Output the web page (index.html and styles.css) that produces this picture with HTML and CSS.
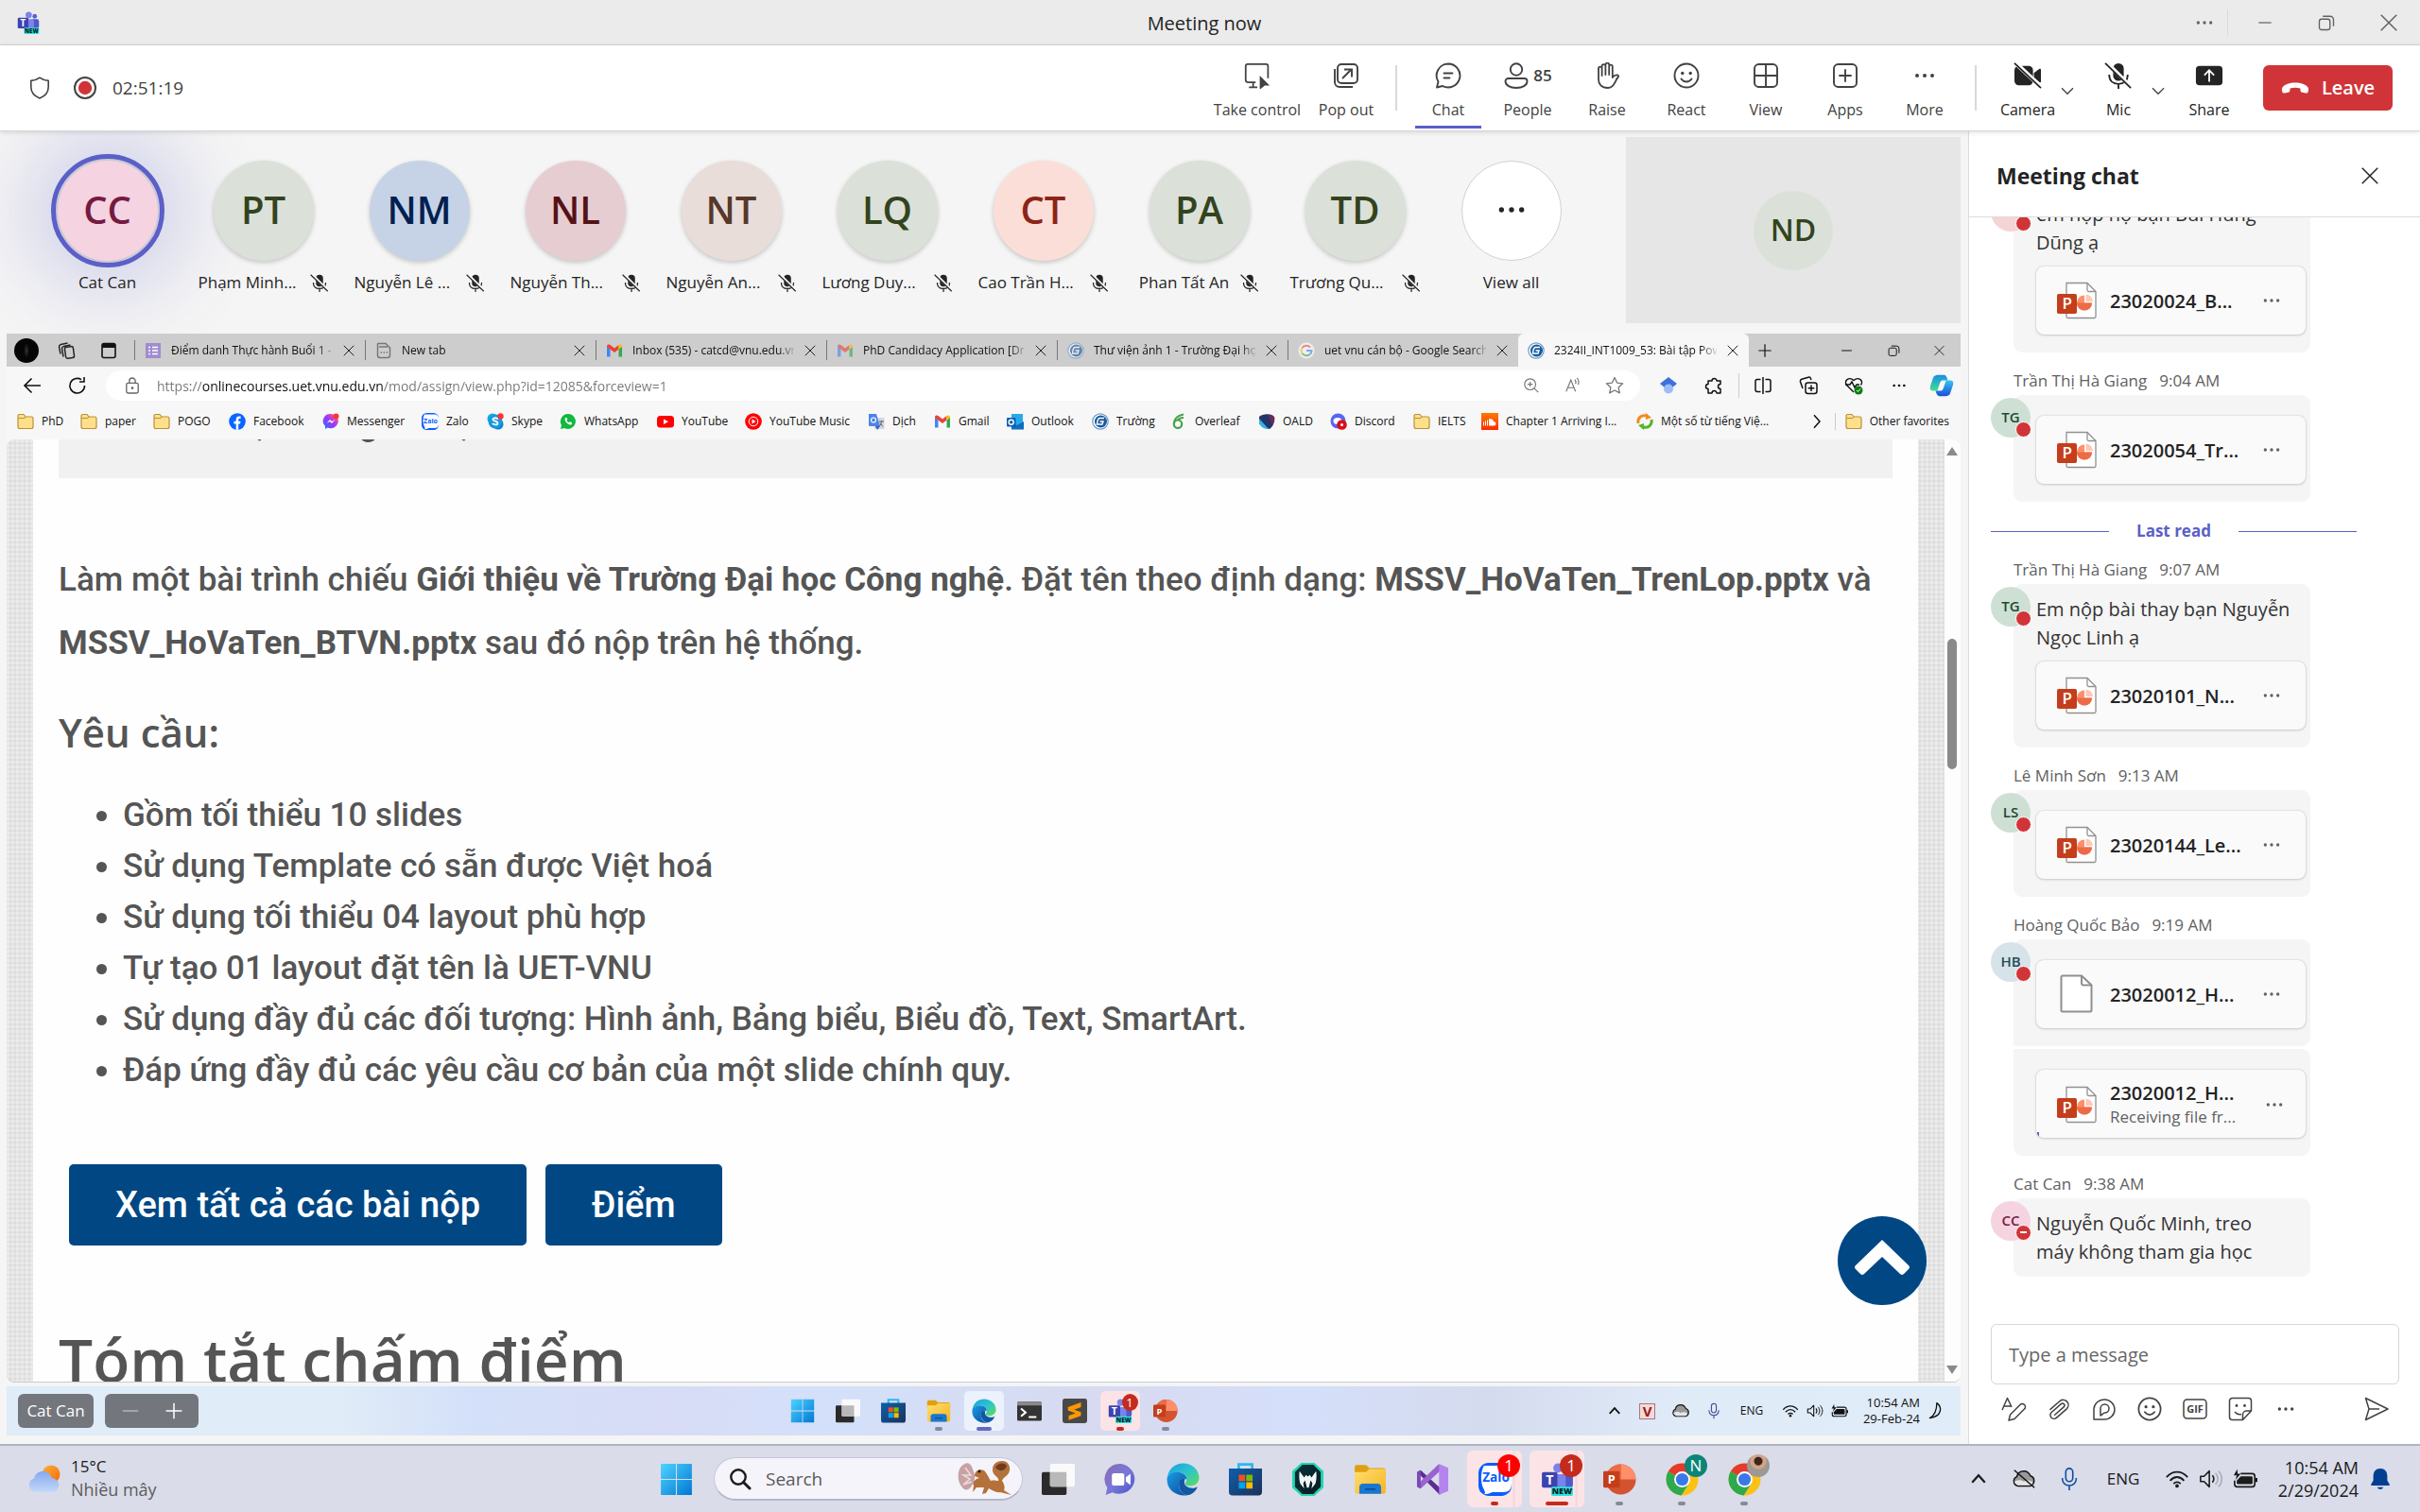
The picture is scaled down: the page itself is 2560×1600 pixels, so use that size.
FILE: index.html
```html
<!DOCTYPE html>
<html lang="vi">
<head>
<meta charset="utf-8">
<title>Meeting now</title>
<link rel="stylesheet" href="styles.css">
</head>
<body>
<svg class="sprite" aria-hidden="true">
  <defs>
    <linearGradient id="gWin" x1="0" y1="0" x2="1" y2="1"><stop offset="0" stop-color="#4fd3ff"/><stop offset="1" stop-color="#0078d4"/></linearGradient>
    <linearGradient id="gFolder" x1="0" y1="0" x2="1" y2="1"><stop offset="0" stop-color="#ffdf74"/><stop offset="1" stop-color="#f5b41c"/></linearGradient>
    <linearGradient id="gEdgeTop" x1="0" y1="0" x2="1" y2="1"><stop offset="0" stop-color="#1aa0e0"/><stop offset=".5" stop-color="#2cc3d0"/><stop offset="1" stop-color="#5fe04e"/></linearGradient>
    <linearGradient id="gEdgeLow" x1="0" y1="0" x2="1" y2="1"><stop offset="0" stop-color="#1b9de2"/><stop offset="1" stop-color="#0b4aa0"/></linearGradient>
    <linearGradient id="gStore" x1="0" y1="0" x2="1" y2="1"><stop offset="0" stop-color="#0f5fae"/><stop offset="1" stop-color="#1b3157"/></linearGradient>
    <linearGradient id="gCloud" x1="0" y1="0" x2="0" y2="1"><stop offset="0" stop-color="#86a8ef"/><stop offset="1" stop-color="#c4d9fa"/></linearGradient>
    <linearGradient id="gSun" x1="0" y1="0" x2="1" y2="1"><stop offset="0" stop-color="#fcb13a"/><stop offset="1" stop-color="#f26a0a"/></linearGradient>
    <linearGradient id="gMeet" x1="0" y1="0" x2="1" y2="1"><stop offset="0" stop-color="#8d6aae"/><stop offset=".5" stop-color="#7a78d8"/><stop offset="1" stop-color="#4b54c8"/></linearGradient>
    <linearGradient id="gMsg" x1="1" y1="0" x2="0" y2="1"><stop offset="0" stop-color="#ff6968"/><stop offset=".5" stop-color="#a334fa"/><stop offset="1" stop-color="#0a7cff"/></linearGradient>
    <linearGradient id="gGem" x1="0" y1="0" x2="1" y2="1"><stop offset="0" stop-color="#06333a"/><stop offset="1" stop-color="#0a1a22"/></linearGradient>
    <linearGradient id="gCopA" x1="0" y1="0" x2="0" y2="1"><stop offset="0" stop-color="#1b8fe8"/><stop offset="1" stop-color="#3fe08c"/></linearGradient>
    <linearGradient id="gCopB" x1="0" y1="0" x2="0" y2="1"><stop offset="0" stop-color="#36c6f4"/><stop offset="1" stop-color="#1a4fd8"/></linearGradient>
    <linearGradient id="gSc" x1="0" y1="0" x2="0" y2="1"><stop offset="0" stop-color="#ff7a00"/><stop offset="1" stop-color="#ff2a00"/></linearGradient>
  </defs>
  <symbol id="dots" viewBox="0 0 24 24"><circle cx="4" cy="12" r="2"/><circle cx="12" cy="12" r="2"/><circle cx="20" cy="12" r="2"/></symbol>
  <symbol id="close" viewBox="0 0 24 24"><path d="M3 3l18 18M21 3L3 21" fill="none" stroke="currentColor" stroke-width="1.6"/></symbol>
  <symbol id="minus" viewBox="0 0 24 24"><path d="M2 12h20" fill="none" stroke="currentColor" stroke-width="1.8"/></symbol>
  <symbol id="plus" viewBox="0 0 24 24"><path d="M2 12h20M12 2v20" fill="none" stroke="currentColor" stroke-width="1.8"/></symbol>
  <symbol id="restore" viewBox="0 0 24 24"><g fill="none" stroke="currentColor" stroke-width="1.8"><rect x="2" y="7" width="15" height="15" rx="3"/><path d="M7 3h10a5 5 0 0 1 5 5v9"/></g></symbol>
  <symbol id="down" viewBox="0 0 24 24"><path d="M3 8l9 9 9-9" fill="none" stroke="currentColor" stroke-width="2"/></symbol>
  <symbol id="up" viewBox="0 0 24 24"><path d="M3 17l9-10 9 10" fill="none" stroke="currentColor" stroke-width="3"/></symbol>
  <symbol id="right" viewBox="0 0 24 24"><path d="M8 3l8 9-8 9" fill="none" stroke="currentColor" stroke-width="2"/></symbol>
  <symbol id="shield" viewBox="0 0 24 24"><path d="M12 1.2c2.6 2 5.6 3 9.2 3.200V11c0 5.800-3.200 9.600-9.200 12C6 20.600 2.800 16.800 2.800 11V4.400C6.400 4.200 9.400 3.200 12 1.200z" fill="none" stroke="currentColor" stroke-width="1.600" stroke-linejoin="round"/></symbol>
  <symbol id="rec" viewBox="0 0 24 24"><circle cx="12" cy="12" r="11" fill="#fff" stroke="#424242" stroke-width="2"/><circle cx="12" cy="12" r="7.200" fill="#d13438"/></symbol>
  <symbol id="control" viewBox="0 0 32 32"><path d="M14 24H4.500A2.500 2.500 0 0 1 2 21.500v-17A2.500 2.500 0 0 1 4.500 2h22A2.500 2.500 0 0 1 29 4.500V19M11 24v6M6 30h10" fill="none" stroke="currentColor" stroke-width="2"/><path d="M19 16l12 12h-6l-6 5z" fill="currentColor"/></symbol>
  <symbol id="popout" viewBox="0 0 28 28"><g fill="none" stroke="currentColor" stroke-width="1.900"><rect x="5" y="2" width="21" height="20" rx="4"/><path d="M2 7v14a5 5 0 0 0 5 5h14M10 17l9-9M12 7.500h8v8"/></g></symbol>
  <symbol id="chat" viewBox="0 0 28 28"><g fill="none" stroke="currentColor" stroke-width="1.900" stroke-linecap="round" stroke-linejoin="round"><path d="M14 1.500a12.500 12.500 0 1 1-6 23.500l-6 1.500 1.500-6A12.500 12.500 0 0 1 14 1.500z"/><path d="M9.500 11.500h9M9.500 16.500h6"/></g></symbol>
  <symbol id="people" viewBox="0 0 28 28"><g fill="none" stroke="currentColor" stroke-width="1.900"><circle cx="14" cy="7.500" r="6.200"/><path d="M5.500 17h17a3 3 0 0 1 3 3c0 4.500-5 7-11.500 7S2.500 24.500 2.500 20a3 3 0 0 1 3-3z"/></g></symbol>
  <symbol id="hand" viewBox="0 0 28 28"><path d="M5 14V6.500a1.800 1.800 0 0 1 3.600 0V14 4a1.900 1.900 0 0 1 3.800 0v9-10.500a1.900 1.900 0 0 1 3.800 0V13 4.500a1.800 1.800 0 0 1 3.600 0V16c1.500-2 3-3 5.200-2.500 1.400.3 1.400 1.600.4 2.500-3 3-3.500 11-10.400 11C8 27 5 23 5 18z" fill="none" stroke="currentColor" stroke-width="1.800" stroke-linejoin="round"/></symbol>
  <symbol id="smile" viewBox="0 0 28 28"><circle cx="14" cy="14" r="12.500" fill="none" stroke="currentColor" stroke-width="1.900"/><circle cx="9.800" cy="11.500" r="1.700" fill="currentColor"/><circle cx="18.200" cy="11.500" r="1.700" fill="currentColor"/><path d="M8.500 17.500c3 4 8 4 11 0" fill="none" stroke="currentColor" stroke-width="1.900" stroke-linecap="round"/></symbol>
  <symbol id="grid" viewBox="0 0 28 28"><g fill="none" stroke="currentColor" stroke-width="1.900"><rect x="2" y="2" width="24" height="24" rx="4.500"/><path d="M14 2v24M2 14h24"/></g></symbol>
  <symbol id="apps" viewBox="0 0 28 28"><g fill="none" stroke="currentColor" stroke-width="1.900" stroke-linecap="round"><rect x="2" y="2" width="24" height="24" rx="4.500"/><path d="M14 8v12M8 14h12"/></g></symbol>
  <symbol id="camoff" viewBox="0 0 32 30"><rect x="1" y="4" width="21" height="22" rx="5"/><path d="M23 12l6-4.500q2-1 2 1v13q0 2-2 1L23 18z"/><path d="M2 .5l30 28" stroke="#fff" stroke-width="5"/><path d="M1 1l30 28" stroke="currentColor" stroke-width="1.900"/></symbol>
  <symbol id="micoff" viewBox="0 0 32 30"><rect x="10" y="1" width="12" height="20" rx="6"/><path d="M5.500 14c0 7 4.500 10.500 10.500 10.500S26.500 21 26.500 14M16 25v5" fill="none" stroke="currentColor" stroke-width="2"/><path d="M3 .5l28 28" stroke="#f9f9f9" stroke-width="4.500"/><path d="M1 1l29 28" stroke="currentColor" stroke-width="1.900"/></symbol>
  <symbol id="share" viewBox="0 0 32 24"><rect x="1" y="1" width="30" height="22" rx="4"/><path d="M16 19V6M10.500 11.500L16 6l5.500 5.500" fill="none" stroke="#fff" stroke-width="1.900"/></symbol>
  <symbol id="hangup" viewBox="0 0 30 14"><path d="M15 1.500c6 0 11 1.800 13.500 5 1 1.500.6 4-.2 5.200-.6.9-1.500 1-2.500.8l-3.500-.8c-1-.3-1.600-.8-1.700-1.800l-.3-2.400c-3.500-1-7.200-1-10.700 0l-.3 2.400c-.1 1-.7 1.500-1.700 1.800l-3.500.8c-1 .2-1.900.1-2.500-.8C.9 10.500.5 8 1.500 6.500c2.500-3.200 7.500-5 13.500-5z"/></symbol>
  <symbol id="teams" viewBox="0 0 32 32"><circle cx="25" cy="7" r="3.200" fill="#5a62c8"/><circle cx="16.500" cy="5" r="4.500" fill="#7b83eb"/><rect x="20" y="11" width="11" height="13" rx="3" fill="#5059c9"/><rect x="10" y="11" width="14" height="17" rx="3" fill="#7b83eb"/><rect x="1" y="9" width="15" height="15" rx="1.500" fill="#3c44b1"/><text x="8.500" y="21" class="logo-letter" text-anchor="middle" fill="#fff">T</text><rect x="10" y="23" width="21" height="9" rx="1.500" fill="#2fe0e0"/><text x="20.500" y="30.400" class="logo-new" text-anchor="middle">NEW</text></symbol>
  <symbol id="ppt" viewBox="0 0 42 40"><path d="M10 1.500h22l9 9V37q0 1.500-1.500 1.500h-28Q10 38.500 10 37z" fill="#fff" stroke="#919191" stroke-width="1.300"/><path d="M32 1.500v7.500q0 1.500 1.500 1.500H41" fill="none" stroke="#919191" stroke-width="1.300"/><path d="M29 14.500v8h8a8 8 0 1 1-8-8z" fill="#ff8f6b"/><path d="M21 22.500h16a8 8 0 0 1-16 0z" fill="#ed6c47"/><path d="M30.500 13.500a8 8 0 0 1 7.500 7.500h-7.500z" fill="#ffc7b5"/><rect x="0" y="13" width="21" height="21" rx="1.800" fill="#c43e1c"/><text x="10.700" y="29" class="ppt-letter" text-anchor="middle" fill="#fff">P</text></symbol>
  <symbol id="file" viewBox="0 0 42 42"><path d="M6 1.500h20l10.500 10V38q0 1.500-1.500 1.500H6Q4.500 39.500 4.500 38V3Q4.500 1.500 6 1.500z" fill="#fff" stroke="#8f8f8f" stroke-width="2"/><path d="M26 1.500v8q0 2 2 2h8.500" fill="none" stroke="#8f8f8f" stroke-width="2"/></symbol>
  <symbol id="format" viewBox="0 0 26 26"><g fill="none" stroke="currentColor" stroke-width="1.500" stroke-linejoin="round"><path d="M1 14L6.500 1.500 11 11M3 10h7"/><path d="M8 25l1.500-6L20 8.500a3 3 0 0 1 4.500 4.500L14 23.500z"/></g></symbol>
  <symbol id="clip" viewBox="0 0 24 26"><path d="M3 14L12.500 4.500a5.500 5.500 0 0 1 8 7.500L10 22.500a3.800 3.800 0 0 1-5.500-5.500L14 7.500a2 2 0 0 1 3 3L8 19.500" transform="rotate(4 12 13)" fill="none" stroke="currentColor" stroke-width="1.500" stroke-linecap="round"/></symbol>
  <symbol id="loop" viewBox="0 0 26 26"><g fill="none" stroke="currentColor" stroke-width="1.500" stroke-linejoin="round"><path d="M2 24V13A11 10.500 0 1 1 13 24z"/><path d="M9 20V12.500a4.500 4.500 0 1 1 4.500 4.500C12 17 11 19 9 20z"/></g></symbol>
  <symbol id="gif" viewBox="0 0 26 26"><rect x="1" y="3" width="24" height="20" rx="3.500" fill="none" stroke="currentColor" stroke-width="1.500"/><text x="13" y="17.200" class="gif-letter" text-anchor="middle">GIF</text></symbol>
  <symbol id="sticker" viewBox="0 0 26 26"><g fill="none" stroke="currentColor" stroke-width="1.500" stroke-linejoin="round"><path d="M4.500 1.500h17a3 3 0 0 1 3 3V15l-9 9.500h-11a3 3 0 0 1-3-3v-17a3 3 0 0 1 3-3zM15.500 24.500V19a4 4 0 0 1 4-4h5M7 16c2 2.500 4.500 3 7 2.500"/></g><circle cx="9" cy="9.500" r="1.400" fill="currentColor"/><circle cx="17.500" cy="9.500" r="1.400" fill="currentColor"/></symbol>
  <symbol id="send" viewBox="0 0 26 26"><path d="M1.500 1.500L25 13 1.500 24.500 5 13zM5 13h11" fill="none" stroke="currentColor" stroke-width="1.500" stroke-linejoin="round"/></symbol>
  <symbol id="win" viewBox="0 0 32 32"><path d="M1 1h14.500v14.500H1zM16.500 1H31v14.500H16.500zM1 16.500h14.500V31H1zM16.500 16.500H31V31H16.500z" fill="url(#gWin)"/></symbol>
  <symbol id="taskview" viewBox="0 0 32 32"><rect x="0" y="9" width="24" height="22" rx="1.500" fill="#2a2a2a"/><rect x="8" y="1" width="24" height="22" rx="1.500" fill="#fafafa"/><path d="M8 9h16v14H9.500Q8 23 8 21.500z" fill="#b9b9b9"/></symbol>
  <symbol id="store" viewBox="0 0 32 32"><path d="M9.500 7V1.500h13V7" fill="none" stroke="#28b9f2" stroke-width="2.500"/><path d="M0 5.500h32V28q0 3.500-3.500 3.500h-25Q0 31.500 0 28z" fill="url(#gStore)"/><path d="M9.500 11.500h6.200v6.200H9.500z" fill="#f25022"/><path d="M16.700 11.500h6.200v6.200h-6.200z" fill="#7fba00"/><path d="M9.500 18.700h6.200v6.200H9.500z" fill="#00a4ef"/><path d="M16.700 18.700h6.200v6.200h-6.200z" fill="#ffb900"/></symbol>
  <symbol id="folder" viewBox="0 0 32 32"><path d="M1 4q0-2 2-2h9l3 3h13q3 0 3 3v4H1z" fill="#dfa010"/><path d="M1 9h11l3-3h16v21.500Q31 30 28.500 30h-25Q1 30 1 27.500z" fill="url(#gFolder)"/><path d="M5.500 30v-6.500Q5.500 20 9 20h14q3.500 0 3.500 3.500V30z" fill="#1877d2"/><path d="M11 25.500h10" stroke="#0c4c94" stroke-width="1.500"/></symbol>
  <symbol id="edge" viewBox="0 0 32 32"><path d="M1 13C2.500 5.500 8.500.5 16 .5 25 .5 31.500 7 31.500 14.500c0 5-4 8-8.500 8-3.500 0-5-1.400-5-2.400 0-1 1.500-1.500 1.500-4.300C19.500 11.500 15 9 11 9 6.500 9 3 11 1 13z" fill="url(#gEdgeTop)"/><path d="M1 13c2-2.700 6-4.500 10-4 5 .5 8.500 3 8.500 7-3-2-7.500.5-7.500 6 0 4.500 3 9 8.500 9.300C10 33 .5 26.500.5 16.500.5 15 .7 14 1 13z" fill="url(#gEdgeLow)"/><path d="M12 21c0-4 2.500-6.300 6-5.500-1 2-2 6.500 4 8.500 3.500 1 6.500 0 8-1-2 5.500-7 8.500-10.500 8C14.500 30.500 12 25.500 12 21z" fill="#1356a4"/></symbol>
  <symbol id="meet" viewBox="0 0 32 32"><path d="M16 1a15 14.500 0 1 1-8 27.500L1.500 31 3 24A14.800 14.800 0 0 1 16 1z" fill="url(#gMeet)"/><rect x="7.500" y="10" width="12" height="12" rx="2" fill="#fff"/><path d="M21 14l4.500-3.500v11L21 18z" fill="#fff"/></symbol>
  <symbol id="gem" viewBox="0 0 36 36"><path d="M11 0h14l10 9v18L25 36H11L1 27V9z" fill="#1fd6b0"/><path d="M12 2h12l8 8v16l-8 8H12l-8-8V10z" fill="url(#gGem)"/><path d="M9 9l5 7 2-3 2 2 2-2 2 3 5-7c1 6 0 12-1 14l-4 5 1-6-2-3-2 8h-2l-2-8-2 3 1 6-4-5c-1-2-2-8-1-14z" fill="#f4f6f6"/></symbol>
  <symbol id="vs" viewBox="0 0 36 36"><path d="M1 10l4-2 22 20-1 7z" fill="#5c2d91"/><path d="M1 26l4 2L27 8l-2-7L2 23z" fill="#9a63d0"/><path d="M25 1l10 4.500v25L25 35V9z" fill="#b583ee"/><path d="M1 10l4-2v20l-4-2z" fill="#7c48b8"/></symbol>
  <symbol id="zalo" viewBox="0 0 36 36"><rect x="0" y="0" width="36" height="36" rx="11" fill="#0b5cff"/><path d="M6 3h21q9 0 9 9v11q0 9-9 9H15c-3 2-6 2-9 2 2-1 1-3 0-5-4-7-4-19 0-26z" fill="#fff"/><text x="19" y="21" class="zalo-letter" text-anchor="middle" fill="#0b5cff">Zalo</text></symbol>
  <symbol id="pptapp" viewBox="0 0 36 34"><circle cx="19" cy="17" r="16.500" fill="#d35230"/><path d="M19 .5V17h16.500A16.500 16.500 0 0 0 19 .5z" fill="#ff8f6b"/><path d="M19 .5A16.500 16.500 0 0 0 2.500 17H19z" fill="#ed6c47"/><rect x="0" y="8" width="18" height="18" rx="1.500" fill="#c43e1c"/><text x="9" y="22" class="logo-letter" text-anchor="middle" fill="#fff">P</text></symbol>
  <symbol id="chrome" viewBox="0 0 36 36"><circle cx="18" cy="18" r="17.500" fill="#fbc116"/><path d="M18 18L2.800 9.300A17.500 17.500 0 0 1 33.200 9.300z" fill="#e33b2e"/><path d="M2.800 9.300A17.500 17.500 0 0 0 17 35.400L25.500 22 18 18z" fill="#2da94f"/><circle cx="18" cy="18" r="8.700" fill="#fff"/><circle cx="18" cy="18" r="6.800" fill="#3b78e7"/></symbol>
  <symbol id="terminal" viewBox="0 0 32 32"><rect x="0" y="4" width="32" height="25" rx="2" fill="#343434"/><path d="M0 6q0-2 2-2h28q2 0 2 2v3H0z" fill="#8a8a8a"/><path d="M5 13l6 5-6 5M15 24h10" fill="none" stroke="#fff" stroke-width="2.500"/></symbol>
  <symbol id="sublime" viewBox="0 0 32 32"><rect x="0" y="0" width="32" height="32" rx="3" fill="#484848"/><path d="M7 11l17-6v6l-9 3.500 9 3v5L8 28v-6l9-3-10-3.500z" fill="#ff9800"/></symbol>
  <symbol id="mic" viewBox="0 0 20 28"><rect x="6" y="2" width="8" height="15" rx="4" fill="none" stroke="currentColor" stroke-width="1.700"/><path d="M2 13c0 6 4 8.500 8 8.500s8-2.500 8-8.500M10 22v5" fill="none" stroke="currentColor" stroke-width="1.700"/></symbol>
  <symbol id="cloud" viewBox="0 0 28 22"><path d="M7 19a5.500 5.500 0 0 1-1-10.500C7 3 11 2 14 2c4 0 6 2 7.500 5.500A6 6 0 0 1 21 19z" fill="#999" stroke="#111" stroke-width="1.600"/><path d="M3 15c3-4 8-3 11-1 3-2 7-2 10 1-1 3-2 3.200-3 3.200H7z" fill="#e6e6e6"/></symbol>
  <symbol id="cloudoff" viewBox="0 0 28 22"><path d="M7 19a5.500 5.500 0 0 1-1-10.500C7 3 11 2 14 2c4 0 6 2 7.500 5.500A6 6 0 0 1 21 19z" fill="#999" stroke="#111" stroke-width="1.600"/><path d="M3 15c3-4 8-3 11-1 3-2 7-2 10 1-1 3-2 3.200-3 3.200H7z" fill="#e6e6e6"/><path d="M3 1l23 20" stroke="#111" stroke-width="1.600"/></symbol>
  <symbol id="wifi" viewBox="0 0 28 22"><g fill="none" stroke="currentColor" stroke-width="2"><path d="M2 9c7-8 17-8 24 0M6 13c5-5.500 11-5.500 16 0M10 16.500c2.500-2.500 5.500-2.500 8 0"/></g><circle cx="14" cy="19" r="2" fill="currentColor"/></symbol>
  <symbol id="sound" viewBox="0 0 28 22"><path d="M2 8h4l6-6v18l-6-6H2z" fill="none" stroke="currentColor" stroke-width="1.700" stroke-linejoin="round"/><path d="M15.500 7c2 2.500 2 5.500 0 8" fill="none" stroke="currentColor" stroke-width="1.700"/><path d="M19 4.500c3.500 4 3.500 9 0 13M22.500 2c5 5.500 5 12.500 0 18" fill="none" stroke="currentColor" stroke-width="1.500"/></symbol>
  <symbol id="soundlow" viewBox="0 0 28 22"><path d="M2 8h4l6-6v18l-6-6H2z" fill="none" stroke="currentColor" stroke-width="1.700" stroke-linejoin="round"/><path d="M15.500 7c2 2.500 2 5.500 0 8" fill="none" stroke="currentColor" stroke-width="1.700"/><path d="M19 4.500c3.500 4 3.500 9 0 13M22.500 2c5 5.500 5 12.500 0 18" fill="none" stroke="#a6a8b6" stroke-width="1.500"/></symbol>
  <symbol id="battery" viewBox="0 0 28 22"><path d="M9 5h13q3 0 3 3v9q0 3-3 3H5q-3 0-3-3v-4" fill="none" stroke="currentColor" stroke-width="1.800"/><path d="M9 8h12q1.500 0 1.500 1.500v6Q22.500 17 21 17H6q-1.500 0-1.500-1.500V13z" fill="currentColor"/><path d="M25.500 10h2.500v4.500h-2.500zM5 0L1 7h3.500L3 12l6-7H5.500z" fill="currentColor"/></symbol>
  <symbol id="bell" viewBox="0 0 22 26"><path d="M11 1c5 0 8 3.500 8 8.500V15l2.500 4v1.500H.5V19L3 15V9.500C3 4.500 6 1 11 1z" fill="#003e92"/><path d="M7.500 22.500h7Q13.500 25 11 25t-3.500-2.500z" fill="#003e92"/></symbol>
  <symbol id="moon" viewBox="0 0 20 24"><path d="M11 2c7 5 7 17-9 19 6-3 9-9 9-19z" fill="none" stroke="currentColor" stroke-width="1.600" stroke-linejoin="round"/></symbol>
  <symbol id="search" viewBox="0 0 24 24"><circle cx="10" cy="10" r="7.700" fill="none" stroke="currentColor" stroke-width="2.400"/><path d="M15.500 15.500L22 22" stroke="currentColor" stroke-width="3" stroke-linecap="round"/></symbol>
  <symbol id="weather" viewBox="0 0 36 30"><circle cx="25" cy="10" r="9.500" fill="url(#gSun)"/><path d="M8 29a7.500 7.500 0 0 1-1-14.500C8 9.500 12 7 16.500 7c4.500 0 8 2.500 9.200 7A7.700 7.700 0 0 1 28 29z" fill="url(#gCloud)"/></symbol>
  <symbol id="squirrel" viewBox="0 0 58 38"><path d="M6 4c5-4 9 0 10 5 3 6 3 12-1 17-2 5-8 6-10 2C-1 22-1 8 6 4z" fill="#c7a1a3"/><path d="M8 7l6 8-8 0 7 4-7 6 9-3" fill="none" stroke="#eddada" stroke-width="1.500"/><path d="M37 9C37 3 42 0 47 0c6 0 9 5 8 10-1 6-7 7-8 11 3 4 3 8 2 10l8 5-12-3c-4 1-8-2-12-4l-3 5-4 1 2-7-8 0-4 5 1-7c-2-4 2-7 6-8l-5-2c0-6 5-8 10-6 3 3 5 8 7 11 3-1 6 0 8 0 2-3-6-6-6-11z" fill="#b5713a"/><path d="M40 7c2-5 9-6 12-2-2 6-7 7-12 2z" fill="#6f3c1f"/><circle cx="23" cy="11" r="1.500" fill="#231208"/></symbol>
  <symbol id="bmfolder" viewBox="0 0 18 18"><path d="M1 3.500Q1 1.500 3 1.500h4l2 2.500h6q2 0 2 2V14.500q0 2-2 2H3q-2 0-2-2z" fill="#ffe08a" stroke="#b8923a" stroke-width="1.200"/><path d="M1.500 5.500H8L9 4" fill="none" stroke="#b8923a"/></symbol>
  <symbol id="fb" viewBox="0 0 18 18"><circle cx="9" cy="9" r="8.800" fill="#0866ff"/><path d="M7.700 17.800V11.500H5.500V8.800h2.200V7.200c0-2.600 1.300-3.700 3.400-3.700.7 0 1.100.1 1.500.1V6h-1.100c-1 0-1.300.6-1.300 1.400v1.400h2.300l-.5 2.700h-1.800v6.200z" fill="#fff"/></symbol>
  <symbol id="msg" viewBox="0 0 18 18"><path d="M9 1a8 7.600 0 1 1-3.500 14.500L3 17v-3A7.600 7.600 0 0 1 9 1z" fill="url(#gMsg)"/><path d="M4.500 11L8 7l2 2 3.500-2L10 11 8 9z" fill="#fff"/><circle cx="14.500" cy="3.500" r="3" fill="#f33"/></symbol>
  <symbol id="skype" viewBox="0 0 18 18"><circle cx="6" cy="6" r="5.500" fill="#19a7e8"/><circle cx="12" cy="12" r="5.500" fill="#0f7fd0"/><circle cx="9" cy="9" r="7.500" fill="#139bdd"/><path d="M12 6.500C10 4.500 6 5 6.500 7.200c.5 1.600 5 1.200 5 3.500 0 2.300-4 2.300-5.500.3" fill="none" stroke="#fff" stroke-width="1.800"/><circle cx="14.500" cy="3.500" r="3.200" fill="#f33"/></symbol>
  <symbol id="wa" viewBox="0 0 18 18"><path d="M9 1a8 8 0 1 1-4 15L1 17l1-4A8 8 0 0 1 9 1z" fill="#12b83f"/><path d="M6 5c-2 3 3.500 9 7 7l-.3-2-2-.8-1 1C8.500 9.500 8 9 7.500 8l.8-1-.8-2z" fill="#fff"/></symbol>
  <symbol id="yt" viewBox="0 0 18 18"><rect x="0" y="3" width="18" height="12.500" rx="3.500" fill="#f00"/><path d="M7 6.500v5.500l5-2.800z" fill="#fff"/></symbol>
  <symbol id="ytm" viewBox="0 0 18 18"><circle cx="9" cy="9" r="8.800" fill="#f00"/><circle cx="9" cy="9" r="4.800" fill="none" stroke="#fff"/><path d="M7.500 6.500v5l4-2.500z" fill="#fff"/></symbol>
  <symbol id="trans" viewBox="0 0 18 18"><rect x="7" y="5" width="10.500" height="12" rx="1" fill="#d3d7de"/><path d="M1 1h8l4 13H2q-1 0-1-1z" fill="#4a86e8"/><path d="M8 14h5l-3 4z" fill="#2f5fc0"/><circle cx="6" cy="7.500" r="2.500" fill="none" stroke="#fff" stroke-width="1.200"/><path d="M12 9h5M14.500 8v1c0 2-1 4-2.500 5M13 10.500l3 4" fill="none" stroke="#667"/></symbol>
  <symbol id="gmail" viewBox="0 0 18 18"><path d="M1 4.500v11h3.500V7.500z" fill="#4285f4"/><path d="M17 4.500v11h-3.500V7.500z" fill="#34a853"/><path d="M1 4.500C1 2 3.500 2 4.500 3L9 6.500 13.500 3v4.500L9 11 1 5z" fill="#ea4335"/><path d="M17 4.500C17 2 14.500 2 13.500 3v4.500L17 5z" fill="#fbbc04"/></symbol>
  <symbol id="outlook" viewBox="0 0 18 18"><rect x="5" y="1" width="12" height="16" fill="#28a8ea"/><path d="M5 10l6 3 7-4v8.500H5z" fill="#0f6cbd"/><rect x="0" y="5" width="9.500" height="9.500" rx="1" fill="#0a5fb4"/><circle cx="4.700" cy="9.700" r="2.500" fill="none" stroke="#fff" stroke-width="1.400"/></symbol>
  <symbol id="uet" viewBox="0 0 18 18"><circle cx="9" cy="9" r="8.200" fill="#fff" stroke="#6d9cc9" stroke-width="1.200"/><circle cx="9.500" cy="9" r="6.500" fill="#195a9e"/><path d="M13 5.500H8Q6 6 5.500 12H11l1-3H8.500" fill="none" stroke="#fff" stroke-width="1.400"/></symbol>
  <symbol id="leaf" viewBox="0 0 18 18"><circle cx="8" cy="11.700" r="4.200" fill="none" stroke="#46a247" stroke-width="2.200"/><path d="M4 11C4 6 7 3 14 1.500M8 7.500C10 5 12 5 14 5" fill="none" stroke="#46a247" stroke-width="2"/></symbol>
  <symbol id="oald" viewBox="0 0 18 18"><path d="M1 4c4-3 12-4 15 0 2 5 0 10-4 13-5-1-9-3-11-6z" fill="#22356b"/><path d="M10 2c4-1 6 1 7 2 1 3 0 6-2 9z" fill="#6a2a5a"/><path d="M1 6l10 11c-5 0-8-2-10-6z" fill="#36b3e0"/></symbol>
  <symbol id="discord" viewBox="0 0 18 18"><circle cx="8.500" cy="8.500" r="8" fill="#5865f2"/><ellipse cx="8" cy="8.500" rx="4.500" ry="3.500" fill="#fff"/><circle cx="12.500" cy="12.500" r="5.300" fill="#d90f16"/><circle cx="12.500" cy="12.500" r="1.500" fill="#fff"/></symbol>
  <symbol id="sc" viewBox="0 0 18 18"><rect width="18" height="18" fill="url(#gSc)"/><path d="M2.500 9.500v4M4.500 8.500v5M6.500 7.500v6" stroke="#fff"/><path d="M8 6.500c3-1 4.500.5 5 2.500 3 0 3.500 4.500.5 4.500H8z" fill="#fff"/></symbol>
  <symbol id="sync" viewBox="0 0 18 18"><path d="M2 11C1 5 6 1 12 3.500" fill="none" stroke="#f58a1f" stroke-width="3"/><path d="M10 0l6 5-6 2z" fill="#f58a1f"/><path d="M16 7c1 6-4 10-10 7.500" fill="none" stroke="#58b52a" stroke-width="3"/><path d="M8 18l-6-5 6-2z" fill="#58b52a"/></symbol>
  <symbol id="forms" viewBox="0 0 18 18"><rect x="1" y="1" width="16" height="16" fill="#a18ccf"/><path d="M4 5.500h2M8 5.500h6M4 9h2M8 9h6M4 12.500h2M8 12.500h6" stroke="#fff" stroke-width="1.600"/></symbol>
  <symbol id="newtab" viewBox="0 0 18 18"><g fill="none" stroke="#777" stroke-width="1.500"><path d="M3 1.500h8l4.500 4.500V14q0 2.500-2.500 2.500H5Q2.500 16.500 2.500 14V2z"/><path d="M4 5h9M5.500 11h1.500M8.500 11h1.500M11.500 11h1.500"/></g></symbol>
  <symbol id="google" viewBox="0 0 18 18"><circle cx="9" cy="9" r="8.500" fill="#eee"/><g fill="none" stroke-width="2"><path d="M13 5.500A5.500 5.500 0 0 0 4.500 6" stroke="#e58a83"/><path d="M4.500 6a5.500 5.500 0 0 0 0 6" stroke="#ecd07d"/><path d="M4.500 12A5.500 5.500 0 0 0 12.500 13" stroke="#7fbf90"/><path d="M12.500 13c1.500-1 2-3 2-4H9" stroke="#84a9e6"/></g></symbol>
  <symbol id="lock" viewBox="0 0 18 22"><rect x="2" y="8" width="14" height="12" rx="2" fill="none" stroke="#666" stroke-width="1.500"/><path d="M5.500 8V5.500a3.500 3.500 0 0 1 7 0V8" fill="none" stroke="#666" stroke-width="1.500"/><circle cx="9" cy="14" r="1.500" fill="#666"/></symbol>
  <symbol id="back" viewBox="0 0 20 20"><path d="M19 10H2M9.500 2.500L2 10l7.500 7.500" fill="none" stroke="currentColor" stroke-width="1.600"/></symbol>
  <symbol id="reload" viewBox="0 0 20 20"><path d="M17.500 10A7.800 7.800 0 1 1 14 3.700M17 1v5h-5" fill="none" stroke="currentColor" stroke-width="1.600"/></symbol>
  <symbol id="pages" viewBox="0 0 20 20"><g fill="none" stroke="#222" stroke-width="1.500"><rect x="8" y="6" width="9" height="12" rx="2" transform="rotate(-8 12 12)"/><path d="M6 16.500L4.500 8q0-2 2-2.500l7-1.500M3 13.500L1.500 6q0-2 2-2.500l7-1.500"/></g></symbol>
  <symbol id="tabs" viewBox="0 0 18 18"><rect x="2" y="1.500" width="14" height="15" rx="2" fill="none" stroke="#111" stroke-width="1.600"/><path d="M2 2h14v4H2z" fill="#111"/></symbol>
  <symbol id="zoomin" viewBox="0 0 20 20"><path d="M13.500 13.500L18 18M8.500 5.500v6M5.500 8.500h6" stroke="currentColor" stroke-width="1.300"/><circle cx="8.500" cy="8.500" r="6.500" fill="none" stroke="currentColor" stroke-width="1.300"/></symbol>
  <symbol id="read" viewBox="0 0 20 20"><path d="M2 17L7.500 3.500 13 17M4 12.500h7M12 3c1.500 1.200 1.500 3.500 1 5M14.500 1c2.500 2 2.500 6 1.500 8" fill="none" stroke="currentColor" stroke-width="1.300"/></symbol>
  <symbol id="star" viewBox="0 0 20 20"><path d="M10 1.500l2.600 5.600 6 .7-4.500 4.100 1.200 6L10 15l-5.300 2.900 1.200-6L1.400 7.800l6-.7z" fill="none" stroke="currentColor" stroke-width="1.300" stroke-linejoin="round"/></symbol>
  <symbol id="scholar" viewBox="0 0 20 20"><path d="M10 1l9 7-6 5H7L1 8z" fill="#3d72dc"/><circle cx="10" cy="13.500" r="5" fill="#9dbdf5"/></symbol>
  <symbol id="puzzle" viewBox="0 0 20 20"><path d="M4 5h4a2.500 2.500 0 1 1 5 0h4v3.500a2.500 2.500 0 1 0 0 5V18h-4a2.500 2.500 0 0 0-5 0H4v-4.500a2.500 2.500 0 0 1 0-5z" fill="none" stroke="currentColor" stroke-width="1.500" stroke-linejoin="round"/></symbol>
  <symbol id="split" viewBox="0 0 20 20"><path d="M7.500 3.500H4Q2 3.500 2 5.500v9q0 2 2 2h3.500M12.500 3.500H16q2 0 2 2v9q0 2-2 2h-3.500M10 1v18" fill="none" stroke="currentColor" stroke-width="1.500"/></symbol>
  <symbol id="collect" viewBox="0 0 20 20"><g fill="none" stroke="currentColor" stroke-width="1.500"><rect x="7" y="7" width="12" height="11.500" rx="2.500"/><path d="M13 9.500v6.500M9.700 12.700h6.600M4 13L1.500 6Q1 4 3 3.200l7-2q2-.5 2.500 1.300l.5 1.500"/></g></symbol>
  <symbol id="heart" viewBox="0 0 20 20"><path d="M10 17L2.500 9.500C-1 5 5 0 10 4.500 15 0 21 5 17.500 9.500M1 9h5l2-3 3 6 2-3h3" fill="none" stroke="currentColor" stroke-width="1.400"/><circle cx="15" cy="15" r="4.500" fill="#107c10"/><path d="M13 15l1.500 1.500 2.500-3" fill="none" stroke="#fff"/></symbol>
  <symbol id="copilot" viewBox="0 0 28 26"><path d="M10 1h7q2 0 3 3l1 3h-6q-2 0-3 3L9 19H4q-4 0-3-5L4 5q1-4 6-4z" fill="url(#gCopA)"/><path d="M18 25h-7q-2 0-3-3l-1-3h6q2 0 3-3l3-9h5q4 0 3 5l-3 9q-1 4-6 4z" fill="url(#gCopB)"/></symbol>
  <symbol id="chevbig" viewBox="0 0 60 40"><path d="M30 1L58 28q2 2 0 4l-5 5q-2 2-4 0L30 19 11 37q-2 2-4 0l-5-5q-2-2 0-4z" fill="#fff"/></symbol>
</svg>

<header class="titlebar">
  <svg class="app-logo"><use href="#teams"/></svg>
  <h1>Meeting now</h1>
  <div class="window-buttons">
    <button aria-label="Options"><svg class="i20"><use href="#dots"/></svg></button>
    <button class="ruled" aria-label="Minimize"><svg class="i16"><use href="#minus"/></svg></button>
    <button aria-label="Restore"><svg class="i18"><use href="#restore"/></svg></button>
    <button aria-label="Close"><svg class="i22"><use href="#close"/></svg></button>
  </div>
</header>

<nav class="toolbar">
  <div class="status"><svg class="i24"><use href="#shield"/></svg><svg class="i24"><use href="#rec"/></svg><span>02:51:19</span></div>
  <button class="tool wide"><svg class="i30"><use href="#control"/></svg>Take control</button>
  <button class="tool"><svg><use href="#popout"/></svg>Pop out</button>
  <span class="rule"></span>
  <button class="tool active"><svg class="i30"><use href="#chat"/></svg>Chat</button>
  <button class="tool"><span class="pair"><svg><use href="#people"/></svg><b>85</b></span>People</button>
  <button class="tool"><svg class="i30"><use href="#hand"/></svg>Raise</button>
  <button class="tool"><svg class="i30"><use href="#smile"/></svg>React</button>
  <button class="tool"><svg><use href="#grid"/></svg>View</button>
  <button class="tool"><svg><use href="#apps"/></svg>Apps</button>
  <button class="tool"><svg class="more"><use href="#dots"/></svg>More</button>
  <span class="rule end"></span>
  <div class="device"><button class="tool dark"><svg class="i30"><use href="#camoff"/></svg>Camera</button><button class="caret" aria-label="Camera options"><svg class="i16"><use href="#down"/></svg></button></div>
  <div class="device"><button class="tool dark"><svg class="i30"><use href="#micoff"/></svg>Mic</button><button class="caret" aria-label="Mic options"><svg class="i16"><use href="#down"/></svg></button></div>
  <button class="tool dark narrow"><svg class="i30"><use href="#share"/></svg>Share</button>
  <button class="leave"><svg><use href="#hangup"/></svg>Leave</button>
</nav>

<main>
  <section class="stage">
    <div class="strip">
      <div class="people">
        <figure class="speaking"><div class="face pink">CC</div><figcaption>Cat Can</figcaption></figure>
        <figure><div class="face green">PT</div><figcaption><span class="cut">Phạm Minh...</span><svg class="mute"><use href="#micoff"/></svg></figcaption></figure>
        <figure><div class="face blue">NM</div><figcaption><span class="cut">Nguyễn Lê ...</span><svg class="mute"><use href="#micoff"/></svg></figcaption></figure>
        <figure><div class="face red">NL</div><figcaption><span class="cut">Nguyễn Th...</span><svg class="mute"><use href="#micoff"/></svg></figcaption></figure>
        <figure><div class="face brown">NT</div><figcaption><span class="cut">Nguyễn An...</span><svg class="mute"><use href="#micoff"/></svg></figcaption></figure>
        <figure><div class="face green">LQ</div><figcaption><span class="cut">Lương Duy...</span><svg class="mute"><use href="#micoff"/></svg></figcaption></figure>
        <figure><div class="face coral">CT</div><figcaption><span class="cut">Cao Trần H...</span><svg class="mute"><use href="#micoff"/></svg></figcaption></figure>
        <figure><div class="face green">PA</div><figcaption><span>Phan Tất An</span><svg class="mute"><use href="#micoff"/></svg></figcaption></figure>
        <figure><div class="face green">TD</div><figcaption><span class="cut">Trương Qu...</span><svg class="mute"><use href="#micoff"/></svg></figcaption></figure>
        <figure><button class="face all" aria-label="View all participants"><svg><use href="#dots"/></svg></button><figcaption>View all</figcaption></figure>
      </div>
      <div class="self"><div class="face small green">ND</div></div>
    </div>

    <div class="shared">
      <div class="tabstrip">
        <span class="me"></span>
        <svg class="i20"><use href="#pages"/></svg>
        <svg class="i18"><use href="#tabs"/></svg>
        <div class="tabs">
          <div class="tab"><svg class="i18"><use href="#forms"/></svg><span>Điểm danh Thực hành Buổi 1 - nhóm</span><button aria-label="Close tab"><svg><use href="#close"/></svg></button></div>
          <div class="tab"><svg class="i18"><use href="#newtab"/></svg><span>New tab</span><button aria-label="Close tab"><svg><use href="#close"/></svg></button></div>
          <div class="tab"><svg class="i18"><use href="#gmail"/></svg><span>Inbox (535) - catcd@vnu.edu.vn</span><button aria-label="Close tab"><svg><use href="#close"/></svg></button></div>
          <div class="tab idle"><svg class="i18"><use href="#gmail"/></svg><span>PhD Candidacy Application [Draft]</span><button aria-label="Close tab"><svg><use href="#close"/></svg></button></div>
          <div class="tab idle"><svg class="i18"><use href="#uet"/></svg><span>Thư viện ảnh 1 - Trường Đại học</span><button aria-label="Close tab"><svg><use href="#close"/></svg></button></div>
          <div class="tab"><svg class="i18"><use href="#google"/></svg><span>uet vnu cán bộ - Google Search</span><button aria-label="Close tab"><svg><use href="#close"/></svg></button></div>
          <div class="tab current"><svg class="i18"><use href="#uet"/></svg><span>2324II_INT1009_53: Bài tập Power</span><button aria-label="Close tab"><svg><use href="#close"/></svg></button></div>
          <button class="newtab" aria-label="New tab"><svg class="i16"><use href="#plus"/></svg></button>
        </div>
        <div class="wb"><button aria-label="Minimize"><svg><use href="#minus"/></svg></button><button aria-label="Restore"><svg><use href="#restore"/></svg></button><button aria-label="Close"><svg class="i16"><use href="#close"/></svg></button></div>
      </div>

      <div class="address">
        <button aria-label="Back"><svg class="i20"><use href="#back"/></svg></button>
        <button aria-label="Refresh"><svg class="i20"><use href="#reload"/></svg></button>
        <div class="url">
          <svg class="lock"><use href="#lock"/></svg>
          <input type="text" aria-label="Address" value="https://onlinecourses.uet.vnu.edu.vn/mod/assign/view.php?id=12085&amp;forceview=1">
          <button aria-label="Zoom"><svg class="i18"><use href="#zoomin"/></svg></button>
          <button aria-label="Read aloud"><svg class="i18"><use href="#read"/></svg></button>
          <button aria-label="Favorite"><svg class="i20"><use href="#star"/></svg></button>
        </div>
        <div class="ext">
          <button aria-label="Scholar"><svg class="i20"><use href="#scholar"/></svg></button>
          <button aria-label="Extensions"><svg class="i20"><use href="#puzzle"/></svg></button>
          <button class="ruled" aria-label="Split screen"><svg class="i20"><use href="#split"/></svg></button>
          <button aria-label="Collections"><svg class="i20"><use href="#collect"/></svg></button>
          <button aria-label="Essentials"><svg class="i20"><use href="#heart"/></svg></button>
          <button aria-label="Settings"><svg class="i16"><use href="#dots"/></svg></button>
          <button class="cop" aria-label="Copilot"><svg class="i26"><use href="#copilot"/></svg></button>
        </div>
      </div>

      <div class="bookmarks">
        <a href="#"><svg><use href="#bmfolder"/></svg>PhD</a>
        <a href="#"><svg><use href="#bmfolder"/></svg>paper</a>
        <a href="#"><svg><use href="#bmfolder"/></svg>POGO</a>
        <a href="#"><svg><use href="#fb"/></svg>Facebook</a>
        <a href="#"><svg><use href="#msg"/></svg>Messenger</a>
        <a href="#"><svg><use href="#zalo"/></svg>Zalo</a>
        <a href="#"><svg><use href="#skype"/></svg>Skype</a>
        <a href="#"><svg><use href="#wa"/></svg>WhatsApp</a>
        <a href="#"><svg><use href="#yt"/></svg>YouTube</a>
        <a href="#"><svg><use href="#ytm"/></svg>YouTube Music</a>
        <a href="#"><svg><use href="#trans"/></svg>Dịch</a>
        <a href="#"><svg><use href="#gmail"/></svg>Gmail</a>
        <a href="#"><svg><use href="#outlook"/></svg>Outlook</a>
        <a href="#"><svg><use href="#uet"/></svg>Trường</a>
        <a href="#"><svg><use href="#leaf"/></svg>Overleaf</a>
        <a href="#"><svg><use href="#oald"/></svg>OALD</a>
        <a href="#"><svg><use href="#discord"/></svg>Discord</a>
        <a href="#"><svg><use href="#bmfolder"/></svg>IELTS</a>
        <a href="#"><svg><use href="#sc"/></svg>Chapter 1 Arriving I...</a>
        <a href="#"><svg><use href="#sync"/></svg>Một số từ tiếng Việ...</a>
        <button aria-label="More favorites"><svg class="i16"><use href="#right"/></svg></button>
        <a class="other" href="#"><svg><use href="#bmfolder"/></svg>Other favorites</a>
      </div>

      <div class="page">
        <article class="course">
          <div class="info"><span>,</span><span>g</span><span>,</span></div>
          <p>Làm một bài trình chiếu <strong>Giới thiệu về Trường Đại học Công nghệ</strong>. Đặt tên theo định dạng: <strong>MSSV_HoVaTen_TrenLop.pptx</strong> và <strong>MSSV_HoVaTen_BTVN.pptx</strong> sau đó nộp trên hệ thống.</p>
          <h3>Yêu cầu:</h3>
          <ul>
            <li>Gồm tối thiểu 10 slides</li>
            <li>Sử dụng Template có sẵn được Việt hoá</li>
            <li>Sử dụng tối thiểu 04 layout phù hợp</li>
            <li>Tự tạo 01 layout đặt tên là UET-VNU</li>
            <li>Sử dụng đầy đủ các đối tượng: Hình ảnh, Bảng biểu, Biểu đồ, Text, SmartArt.</li>
            <li>Đáp ứng đầy đủ các yêu cầu cơ bản của một slide chính quy.</li>
          </ul>
          <div class="actions"><button>Xem tất cả các bài nộp</button><button>Điểm</button></div>
          <h2>Tóm tắt chấm điểm</h2>
        </article>
        <div class="scroll"><i class="tri up"></i><i class="track-top"></i><i class="thumb"></i><i class="track-low"></i><i class="tri low"></i></div>
        <button class="totop" aria-label="Back to top"><svg><use href="#chevbig"/></svg></button>
      </div>

      <div class="remote-bar">
        <div class="labels"><span class="who">Cat Can</span><span class="zoom"><button class="off" aria-label="Zoom out"><svg><use href="#minus"/></svg></button><button aria-label="Zoom in"><svg><use href="#plus"/></svg></button></span></div>
        <div class="apps">
          <span><svg><use href="#win"/></svg></span>
          <span><svg><use href="#taskview"/></svg></span>
          <span><svg><use href="#store"/></svg></span>
          <span class="run"><svg><use href="#folder"/></svg></span>
          <span class="run focus"><svg><use href="#edge"/></svg></span>
          <span><svg><use href="#terminal"/></svg></span>
          <span><svg><use href="#sublime"/></svg></span>
          <span class="run alert"><svg><use href="#teams"/></svg><em>1</em></span>
          <span class="run"><svg><use href="#pptapp"/></svg></span>
        </div>
        <div class="tray">
          <span class="c35"><svg class="i14"><use href="#up"/></svg></span>
          <span class="c35"><b class="unikey">V</b></span>
          <span class="c35"><svg class="i20"><use href="#cloud"/></svg></span>
          <span class="c35 violet"><svg class="i18"><use href="#mic"/></svg></span>
          <span class="c46">ENG</span>
          <span class="c26"><svg class="i18"><use href="#wifi"/></svg></span>
          <span class="c26"><svg class="i18"><use href="#sound"/></svg></span>
          <span class="c26"><svg class="i18"><use href="#battery"/></svg></span>
          <time>10:54 AM<br>29-Feb-24</time>
          <svg class="i20"><use href="#moon"/></svg>
        </div>
      </div>
    </div>
  </section>

  <aside class="chat">
    <header><h2>Meeting chat</h2><button aria-label="Close chat"><svg class="i22"><use href="#close"/></svg></button></header>
    <div class="log">
      <div class="msg"><div class="bubble"><span class="pic rose"><i></i></span><p>em nộp hộ bạn Bùi Hùng Dũng ạ</p><div class="card"><svg><use href="#ppt"/></svg><b>23020024_B...</b><button aria-label="More"><svg><use href="#dots"/></svg></button></div></div></div>
      <div class="msg"><div class="name">Trần Thị Hà Giang<time>9:04 AM</time></div><div class="bubble bare"><span class="pic mint">TG<i></i></span><div class="card"><svg><use href="#ppt"/></svg><b>23020054_Tr...</b><button aria-label="More"><svg><use href="#dots"/></svg></button></div></div></div>
      <div class="lastread"><span>Last read</span></div>
      <div class="msg"><div class="name">Trần Thị Hà Giang<time>9:07 AM</time></div><div class="bubble"><span class="pic mint">TG<i></i></span><p>Em nộp bài thay bạn Nguyễn Ngọc Linh ạ</p><div class="card"><svg><use href="#ppt"/></svg><b>23020101_N...</b><button aria-label="More"><svg><use href="#dots"/></svg></button></div></div></div>
      <div class="msg"><div class="name">Lê Minh Sơn<time>9:13 AM</time></div><div class="bubble bare"><span class="pic mint">LS<i></i></span><div class="card"><svg><use href="#ppt"/></svg><b>23020144_Le...</b><button aria-label="More"><svg><use href="#dots"/></svg></button></div></div></div>
      <div class="msg"><div class="name">Hoàng Quốc Bảo<time>9:19 AM</time></div><div class="bubble bare first"><span class="pic sky">HB<i></i></span><div class="card"><svg><use href="#file"/></svg><b>23020012_H...</b><button aria-label="More"><svg><use href="#dots"/></svg></button></div></div>
        <div class="bubble bare next"><div class="card loading"><svg><use href="#ppt"/></svg><div><b>23020012_H...</b><small>Receiving file fr...</small></div><button aria-label="More"><svg><use href="#dots"/></svg></button></div></div></div>
      <div class="msg"><div class="name">Cat Can<time>9:38 AM</time></div><div class="bubble words"><span class="pic pink">CC<i class="dnd"></i></span><p>Nguyễn Quốc Minh, treo máy không tham gia học</p></div></div>
    </div>
    <form class="compose">
      <input type="text" aria-label="Message" placeholder="Type a message">
      <div class="tools">
        <button type="button" aria-label="Format"><svg><use href="#format"/></svg></button>
        <button type="button" aria-label="Attach"><svg><use href="#clip"/></svg></button>
        <button type="button" aria-label="Loop"><svg><use href="#loop"/></svg></button>
        <button type="button" aria-label="Emoji"><svg><use href="#smile"/></svg></button>
        <button type="button" aria-label="GIF"><svg><use href="#gif"/></svg></button>
        <button type="button" aria-label="Sticker"><svg><use href="#sticker"/></svg></button>
        <button type="button" aria-label="More"><svg class="i20"><use href="#dots"/></svg></button>
        <button type="submit" class="send" aria-label="Send"><svg><use href="#send"/></svg></button>
      </div>
    </form>
  </aside>
</main>

<footer class="taskbar">
  <div class="weather"><svg><use href="#weather"/></svg><div>15°C<small>Nhiều mây</small></div></div>
  <div class="dock">
    <button aria-label="Start"><svg><use href="#win"/></svg></button>
    <label class="find"><svg class="i24"><use href="#search"/></svg><input type="search" placeholder="Search"><svg class="art"><use href="#squirrel"/></svg></label>
    <button aria-label="Task view"><svg><use href="#taskview"/></svg></button>
    <button aria-label="Chat"><svg><use href="#meet"/></svg></button>
    <button aria-label="Edge"><svg><use href="#edge"/></svg></button>
    <button aria-label="Store"><svg><use href="#store"/></svg></button>
    <button aria-label="Predator"><svg><use href="#gem"/></svg></button>
    <button aria-label="Explorer"><svg><use href="#folder"/></svg></button>
    <button aria-label="Visual Studio"><svg><use href="#vs"/></svg></button>
    <button class="run alert" aria-label="Zalo"><svg><use href="#zalo"/></svg><em class="bright">1</em></button>
    <button class="run alert focus" aria-label="Teams"><svg><use href="#teams"/></svg><em>1</em></button>
    <button class="run" aria-label="PowerPoint"><svg><use href="#pptapp"/></svg></button>
    <button class="run" aria-label="Chrome"><svg><use href="#chrome"/></svg><em class="teal">N</em></button>
    <button class="run" aria-label="Chrome"><svg><use href="#chrome"/></svg><em class="photo"></em></button>
  </div>
  <div class="tray">
    <span class="c48"><svg class="i18"><use href="#up"/></svg></span>
    <span class="c48"><svg class="i26"><use href="#cloudoff"/></svg></span>
    <span class="c48 navy"><svg class="i26"><use href="#mic"/></svg></span>
    <span class="c66">ENG</span>
    <span class="c36"><svg class="i26"><use href="#wifi"/></svg></span>
    <span class="c36"><svg class="i26"><use href="#soundlow"/></svg></span>
    <span class="c36"><svg class="i26"><use href="#battery"/></svg></span>
    <time>10:54 AM<br>2/29/2024</time>
    <span class="c36"><svg class="i24"><use href="#bell"/></svg></span>
  </div>
</footer>
</body>
</html>
```

FILE: styles.css
```css
* { box-sizing: border-box; }
html, body { height: 100%; margin: 0; }
body {
  display: flex; flex-direction: column; overflow: hidden;
  font-family: "Open Sans", "Noto Sans", sans-serif; font-size: 17px; line-height: 24px;
  color: #242424; background: #f5f5f5;
}
h1, h2, h3, p, ul, figure { margin: 0; }
h1, h2, h3 { font-weight: 400; }
button { margin: 0; padding: 0; border: 0; background: none; font: inherit; color: inherit; }
input { font: inherit; border: 0; outline: 0; background: none; padding: 0; min-width: 0; }
a { color: inherit; text-decoration: none; }
svg { display: block; flex: none; fill: currentColor; }
.sprite { position: absolute; width: 0; height: 0; }
.i14 { width: 14px; height: 14px; } .i16 { width: 16px; height: 16px; } .i18 { width: 18px; height: 18px; }
.i20 { width: 20px; height: 20px; } .i22 { width: 22px; height: 22px; } .i24 { width: 24px; height: 24px; }
.i26 { width: 26px; height: 26px; }
.logo-letter { font: 700 13px "Open Sans", sans-serif; }
.logo-new { font: 800 8px "Open Sans", sans-serif; fill: #022; }
.ppt-letter { font: 600 17px "Open Sans", sans-serif; }
.gif-letter { font: 700 11px "Open Sans", sans-serif; fill: currentColor; }
.zalo-letter { font: 700 14px "Open Sans", sans-serif; }

/* title bar */
.titlebar { flex: none; height: 48px; display: grid; grid-template-columns: 1fr auto 1fr; align-items: center; background: #ebebeb; border-bottom: 1px solid #d6d6d6; }
.app-logo { width: 24px; height: 24px; margin-left: 18px; }
.titlebar h1 { font-size: 20px; color: #242424; padding: 2px 12px 0 0; }
.window-buttons { display: flex; justify-content: flex-end; color: #616161; }
.window-buttons button { width: 66px; height: 28px; display: grid; place-items: center; }
.window-buttons button:first-child { width: 48px; }
.window-buttons .ruled { width: 72px; border-left: 1px solid #dadada; padding-left: 6px; }

/* toolbar */
.toolbar { flex: none; height: 91px; display: flex; background: #fff; border-bottom: 1px solid #d6d6d6; box-shadow: 0 1px 5px #0002; padding-right: 29px; z-index: 2; color: #424242; }
.status { flex: 1; display: flex; align-items: center; gap: 24px; padding-left: 30px; font-size: 19px; }
.status span { margin-left: -7px; }
.tool { width: 84px; padding-top: 18px; display: flex; flex-direction: column; align-items: center; gap: 10px; font-size: 16px; white-space: nowrap; }
.tool svg { width: 28px; height: 28px; }
.tool .i30 { width: 30px; height: 28px; }
.tool .more { width: 24px; }
.tool.wide { width: 104px; }
.tool.dark { width: 66px; color: #242424; }
.tool.active { background: linear-gradient(#5b5fc7, #5b5fc7) 50% 85px / 70px 3px no-repeat; }
.pair { display: flex; align-items: center; gap: 4px; }
.pair b { font-size: 17px; font-weight: 600; line-height: 28px; }
.rule { width: 2px; height: 48px; margin: 21px 12px 0 10px; background: #d9d9d9; }
.rule.end { margin-right: 21px; margin-left: 11px; }
.device { display: flex; width: 96px; }
.caret { width: 18px; height: 96px; display: grid; place-items: center; color: #424242; }
.leave { width: 137px; height: 48px; margin: 21px 0 0 24px; border-radius: 6px; background: #d13438; color: #fff; font-size: 20px; font-weight: 600; display: flex; align-items: center; justify-content: center; gap: 13px; }
.leave svg { width: 30px; height: 14px; }

main { flex: 1; min-height: 0; display: grid; grid-template-columns: minmax(0, 1fr) 478px; }
.stage { display: flex; flex-direction: column; min-height: 0; padding: 0 8px 9px 7px; }
.strip { flex: none; height: 214px; display: flex; justify-content: space-between; margin-left: -7px; overflow: hidden; }
.people { display: flex; padding: 31px 0 0 31px; }
.people figure { width: 165px; display: flex; flex-direction: column; align-items: center; gap: 11px; }
.face { width: 106px; height: 106px; border-radius: 50%; display: grid; place-items: center; font-size: 40px; font-weight: 600; line-height: 1; box-shadow: 0 2px 5px #0003; padding-bottom: 2px; }
.speaking .face { outline: 5px solid #5b5fc7; outline-offset: 2px; box-shadow: 0 0 0 2px #c8c9d6, 0 0 80px 34px #5b5fc73a; }
.pink { background: #f5d3e0; color: #751a40; } .green { background: #dbe1d8; color: #33431f; }
.blue { background: #c6d3e7; color: #00204f; } .red { background: #e6cdd1; color: #541217; }
.brown { background: #e8ddd9; color: #56382a; } .coral { background: #fcded8; color: #8c2418; }
.all { background: #fff; border: 1px solid #d1d1d1; box-shadow: none; color: #242424; }
.all svg { width: 32px; height: 32px; }
figcaption { display: flex; align-items: center; gap: 12px; white-space: nowrap; }
.cut { width: 106px; }
.mute { width: 20px; height: 19px; }
.self { width: 354px; height: 197px; margin-top: 6px; background: #e6e6e6; display: grid; place-items: center; }
.face.small { width: 84px; height: 84px; font-size: 32px; box-shadow: none; }

/* shared browser window */
.shared { flex: 1; min-height: 0; display: flex; flex-direction: column; background: #f7f7f7; font-size: 12px; line-height: 18px; color: #111; }
.tabstrip { flex: none; height: 35px; display: flex; align-items: center; background: #cdcdcd; padding-left: 8px; }
.me { width: 26px; height: 26px; border-radius: 50%; background: radial-gradient(ellipse 3px 8px at 50% 50%, #333, #050505); margin-right: 20px; }
.tabstrip > .i20 { margin-right: 25px; }
.tabs { display: flex; flex: 1; height: 35px; margin-left: 18px; align-items: center; }
.tab { width: 244px; height: 21px; display: flex; align-items: center; gap: 10px; padding: 0 10px; border-left: 1px solid #777; }
.tab span { flex: 1; overflow: hidden; white-space: nowrap; mask-image: linear-gradient(90deg, #000 155px, transparent 174px); }
.tab button svg { width: 14px; height: 14px; }
.tab.idle > svg { opacity: .6; }
.tab.current { height: 35px; background: #f7f7f7; border: 0; border-radius: 6px 6px 0 0; }
.newtab { margin-left: 9px; }
.wb { display: flex; }
.wb button { width: 50px; display: grid; place-items: center; }
.wb button:last-child { width: 46px; }
.wb svg { width: 13px; height: 16px; }
.address { flex: none; height: 40px; display: flex; align-items: center; padding-left: 17px; }
.address > button { width: 48px; }
.address > button:nth-child(2) { width: 40px; }
.url { flex: 1; height: 32px; border-radius: 16px; background: #fff; display: flex; align-items: center; padding: 0 5px 0 20px; color: #777; }
.lock { width: 16px; height: 20px; }
.url input { flex: 1; margin-left: 18px; font-size: 14px; height: 24px; color: transparent; background: linear-gradient(90deg, #777 48px, #111 48px 240px, #777 240px); background-clip: text; -webkit-background-clip: text; }
.url button { width: 44px; display: grid; place-items: center; }
.ext { display: flex; padding-left: 6px; }
.ext button { width: 48px; height: 26px; display: grid; place-items: center; }
.ext .ruled { border-left: 1px solid #ccc; margin-left: 2px; width: 50px; }
.ext .cop { width: 41px; }
.bookmarks { flex: none; height: 37px; padding-left: 11px; display: grid; align-items: center; grid-template-columns: 67px 77px 80px 99px 105px 69px 77px 103px 93px 130px 70px 77px 90px 83px 93px 76px 88px 72px 164px 164px 1fr auto; padding-bottom: 2px; }
.bookmarks a { display: flex; align-items: center; gap: 8px; white-space: nowrap; }
.bookmarks svg { width: 18px; height: 18px; }
.bookmarks button { justify-self: end; padding-right: 10px; }
.bookmarks .other { border-left: 1px solid #ccc; padding: 0 12px 0 10px; }

.page { flex: 1; min-height: 0; display: flex; position: relative; overflow: hidden; border-radius: 8px; border-bottom: 1px solid #ccc; color: #555;
  background: repeating-linear-gradient(90deg, #0000 0 3px, #00000009 3px 5px), repeating-linear-gradient(#0000 0 3px, #00000009 3px 5px), #ebebeb; }
.course { flex: 1; min-width: 0; margin: 0 28px; padding: 0 27px; background: #fefefe; overflow: hidden; font-family: Roboto, "Noto Sans", sans-serif; font-size: 35px; font-weight: 500; line-height: 54px; }
.info { height: 41px; overflow: hidden; background: #f1f1f1; padding-left: 210px; display: grid; grid-template-columns: 108px 108px auto; justify-content: start; }
.info span { margin-top: -42px; }
.course p { margin-top: 74px; line-height: 67px; }
.course h3 { margin-top: 31px; font: 600 42px/60px "Open Sans", "Noto Sans", sans-serif; }
.course ul { margin-top: 31px; padding-left: 68px; }
.actions { display: flex; gap: 20px; margin: 72px 0 0 11px; }
.actions button { height: 86px; padding: 0 49px; border-radius: 5px; background: #004784; color: #fff; font-size: 38px; }
.course h2 { margin-top: 76px; font: 600 64px/90px "Open Sans", "Noto Sans", sans-serif; white-space: nowrap; }
.scroll { width: 17px; display: flex; flex-direction: column; align-items: center; background: #fdfdfd; padding: 8px 2px 8px 0; }
.tri { border: 6px solid transparent; height: 0; flex: none; }
.tri.up { border-top: 0; border-bottom: 9px solid #8a8a8a; }
.tri.low { border-bottom: 0; border-top: 9px solid #8a8a8a; }
.thumb { width: 10px; flex: 138; border-radius: 5px; background: #8a8a8a; }
.track-top { flex: 194; } .track-low { flex: 630; }
.totop { position: absolute; right: 36px; bottom: 81px; width: 94px; height: 94px; border-radius: 50%; background: #004784; display: grid; place-items: center; padding-bottom: 6px; }
.totop svg { width: 60px; height: 40px; }

.remote-bar { flex: none; height: 56px; border-top: 4px solid #f3f4f5; display: grid; grid-template-columns: 1fr auto 1fr; align-items: center; background: linear-gradient(90deg, #e0ecf7 0, #e0ecf7 17%, #d4e0f9 24%, #d8dcf6 34%, #d4e0fa 42%, #d7daf0 56%, #d5dffa 66%, #d5dbee 76%, #e0ebf8 86%, #e0ecf8); }
.labels { display: flex; gap: 12px; padding-left: 12px; color: #fff; font-size: 17px; }
.labels > span { height: 36px; border-radius: 6px; background: #73777d; display: flex; align-items: center; justify-content: center; }
.who { width: 80px; } .zoom { width: 99px; gap: 26px; }
.zoom svg { width: 20px; height: 20px; } .zoom .off { opacity: .45; }
.apps { display: flex; }
.apps span { position: relative; width: 48px; height: 42px; display: grid; place-items: center; }
.apps svg { width: 26px; height: 26px; }
.run::after { content: ""; position: absolute; left: 50%; bottom: 0; width: 8px; height: 4px; margin-left: -4px; border-radius: 2px; background: #868a95; }
.run em { position: absolute; font-style: normal; border-radius: 50%; background: #c42b1c; color: #fff; text-align: center; }
.apps em { width: 17px; height: 18px; right: 2px; top: 3px; font-size: 13px; line-height: 18px; }
.apps .focus { background: #ecf2fc; border-radius: 5px; width: 42px; margin: 0 3px; }
.apps .alert { background: #fbe3e6; border-radius: 5px; width: 42px; margin: 0 3px; }
.apps .focus::after { width: 16px; margin-left: -8px; background: #6468b8; }
.run.alert::after { background: #c42b1c; }
.tray { display: flex; align-items: center; justify-content: flex-end; }
.tray span { display: grid; place-items: center; }
.tray time { text-align: right; white-space: nowrap; }
.remote-bar .tray { padding-right: 16px; }
.remote-bar time { width: 72px; font-size: 13px; line-height: 17px; margin-right: 7px; }
.remote-bar .c46 { margin-right: 5px; }
.c26 { width: 26px; } .c35 { width: 35px; } .c36 { width: 36px; } .c46 { width: 46px; } .c48 { width: 48px; } .c66 { width: 66px; }
.unikey { width: 17px; height: 17px; background: #f3dada; border: 1px solid #a77; color: #a01818; font-size: 15px; line-height: 15px; text-align: center; }
.violet { color: #4a4a96; } .navy { color: #0b4da2; }

/* chat panel */
.chat { border-left: 1px solid #dcdcdc; background: #fff; display: flex; flex-direction: column; min-height: 0; }
.chat header { flex: none; height: 91px; border-bottom: 1px solid #dcdcdc; display: flex; align-items: center; justify-content: space-between; padding: 4px 42px 0 29px; }
.chat h2 { font-size: 23px; font-weight: 700; }
.log { flex: 1; min-height: 0; overflow: hidden; display: flex; flex-direction: column; justify-content: flex-end; padding: 0 22px 50px 23px; }
.msg { flex: none; padding: 16px 0 0 24px; }
.name { height: 29px; line-height: 28px; color: #616161; }
.name time { margin-left: 13px; }
.bubble { position: relative; width: 314px; border-radius: 9px; background: #f5f5f5; padding: 12px 5px 19px 24px; }
.bubble.bare { padding-top: 22px; }
.bubble.first { border-bottom-left-radius: 0; }
.bubble.next { border-top-left-radius: 0; margin-top: 3px; }
.bubble.words { padding: 12px 24px 11px 24px; }
.bubble p { font-size: 20px; line-height: 30px; color: #333; }
.bubble p + .card { margin-top: 10px; }
.pic { position: absolute; left: -24px; top: 3px; width: 42px; height: 42px; border-radius: 50%; font-size: 15px; font-weight: 600; line-height: 41px; text-align: center; }
.pic i { position: absolute; right: -1px; bottom: 0; width: 17px; height: 17px; border-radius: 50%; border: 1px solid #fff; background: #d13438; }
.dnd::after { content: ""; position: absolute; left: 4px; top: 6px; width: 7px; height: 2px; background: #fff; }
.mint { background: #cee0d4; color: #1c4a33; } .sky { background: #d6e3e9; color: #234a58; } .rose { background: #f4d4d6; }
.card { height: 72px; border-radius: 8px; background: #fafafa; box-shadow: 0 0 2px #0003, 0 1px 3px #0002; display: flex; align-items: center; padding: 0 26px 0 22px; }
.card > svg { width: 42px; height: 42px; margin-right: 14px; }
.card b { display: block; font-size: 20px; font-weight: 600; white-space: nowrap; padding-top: 1px; }
.card small { display: block; padding-top: 1px; font-size: 17px; line-height: 24px; color: #616161; white-space: nowrap; }
.card button { margin-left: auto; color: #616161; }
.card button svg { width: 20px; height: 20px; }
.card.loading { padding: 2px 23px 0 22px; background: linear-gradient(#5b5fc7, #5b5fc7) 1px 66px / 2px 4px no-repeat #fafafa; }
.lastread { flex: none; margin-top: 20px; height: 22px; line-height: 22px; padding-right: 45px; display: flex; align-items: center; color: #5b5fc7; font-weight: 700; }
.lastread::before, .lastread::after { content: ""; height: 1px; flex: 0 0 125px; background: #5b5fc7; }
.lastread span { flex: 1; text-align: center; white-space: nowrap; }
.compose { flex: none; padding: 0 22px 11px 23px; }
.compose input { width: 100%; height: 64px; border: 1px solid #d6d6d6; border-radius: 6px; padding: 0 18px; font-size: 20px; display: block; }
.compose input::placeholder { color: #666; opacity: 1; }
.tools { display: flex; height: 52px; color: #424242; }
.tools button { width: 48px; display: grid; place-items: center; }
.tools svg { width: 26px; height: 26px; }
.tools .i20 { width: 20px; }
.tools .send { margin-left: auto; }

/* desktop taskbar */
.taskbar { flex: none; height: 72px; border-top: 2px solid #b0b3c2; background: #dadcea; display: grid; grid-template-columns: 1fr auto 1fr; align-items: center; color: #1b1b1b; }
.weather { display: flex; gap: 10px; align-items: center; padding-left: 29px; }
.weather svg { width: 36px; height: 30px; }
.weather small { display: block; font-size: 18px; color: #5c5c5c; }
.weather > div { padding-bottom: 2px; }
.dock { display: flex; align-items: center; }
.dock button { position: relative; width: 66px; height: 60px; display: grid; place-items: center; }
.dock button svg { width: 35px; height: 35px; }
.find { width: 327px; height: 46px; margin: 0 4px 0 7px; border-radius: 23px; background: #f4f4fa; border: 1px solid #c5c7d8; border-bottom: 2px solid #b4b6c8; display: flex; align-items: center; padding: 0 10px 0 15px; }
.find input { flex: 1; margin-left: 15px; font-size: 19px; }
.find input::placeholder { color: #5a5a5a; opacity: 1; }
.art { width: 58px; height: 38px; }
.dock em { width: 24px; height: 24px; right: 6px; top: 4px; font-size: 17px; line-height: 24px; }
.dock .bright { background: #f00; } .dock .teal { background: #0c8578; }
.dock .photo { background: radial-gradient(circle at 50% 30%, #3a2620 4px, #d8a285 5px 8px, #9c9894 9px); }
.dock .alert::before { content: ""; position: absolute; z-index: -1; inset: 0 4px 0 4px; border-radius: 6px; background: linear-gradient(90deg, #fce4e6 48px, #f3d6dd 49px 50px, #fce4e6 51px); }
.dock .alert { z-index: 0; }
.dock .run::after { bottom: 2px; }
.dock .focus::after { width: 24px; margin-left: -12px; }
.taskbar .tray { padding-right: 24px; }
.taskbar .c66 { margin-right: 6px; }
.taskbar time { width: 102px; margin-right: 5px; font-size: 18px; }
```
